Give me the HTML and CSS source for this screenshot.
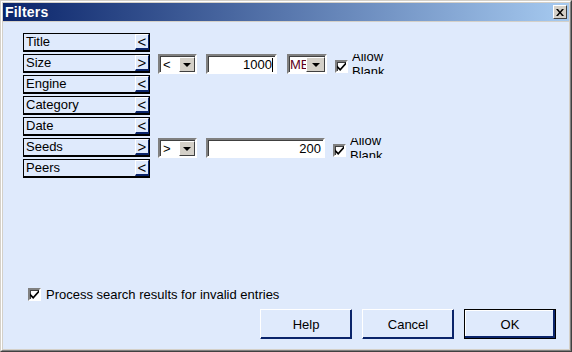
FILE: index.html
```html
<!DOCTYPE html>
<html lang="en">
<head>
  <meta charset="UTF-8">
  <title>Filters</title>
  <link rel="stylesheet" href="styles.css">
</head>
<body>

  <div class="window">
    <div class="frame">
      <div class="titlebar">
        <span class="title">Filters</span>
        <span class="close">
          <svg width="8" height="7" viewBox="0 0 8 7"><path d="M0 0h2l2 2.5L6 0h2L5 3.5 8 7H6L4 4.5 2 7H0l3-3.5z" fill="#000"/></svg>
        </span>
      </div>

      <div class="client">
        <div class="fields">
          <div class="row">
            <div class="field"><span class="name">Title</span><span class="dir">&lt;</span></div>
          </div>
          <div class="row">
            <div class="field"><span class="name">Size</span><span class="dir">&gt;</span></div>
            <div class="combo op"><span class="value">&lt;</span><span class="drop"><i></i></span></div>
            <div class="edit small">1000<span class="caret"></span></div>
            <div class="combo unit"><span class="value unit-text">MB</span><span class="drop"><i></i></span></div>
            <span class="check"><svg width="9" height="9" viewBox="0 0 7 7"><path d="M0 2.5l2.5 2.5L7 0v2L2.5 7 0 4.5z" fill="#000"/></svg></span>
            <div class="allow">Allow<br>Blank</div>
          </div>
          <div class="row">
            <div class="field"><span class="name">Engine</span><span class="dir">&lt;</span></div>
          </div>
          <div class="row">
            <div class="field"><span class="name">Category</span><span class="dir">&lt;</span></div>
          </div>
          <div class="row">
            <div class="field"><span class="name">Date</span><span class="dir">&lt;</span></div>
          </div>
          <div class="row">
            <div class="field"><span class="name">Seeds</span><span class="dir">&gt;</span></div>
            <div class="combo op"><span class="value">&gt;</span><span class="drop"><i></i></span></div>
            <div class="edit wide">200</div>
            <span class="check"><svg width="9" height="9" viewBox="0 0 7 7"><path d="M0 2.5l2.5 2.5L7 0v2L2.5 7 0 4.5z" fill="#000"/></svg></span>
            <div class="allow">Allow<br>Blank</div>
          </div>
          <div class="row">
            <div class="field"><span class="name">Peers</span><span class="dir">&lt;</span></div>
          </div>
        </div>

        <div class="spacer"></div>

        <label class="process">
          <span class="check"><svg width="9" height="9" viewBox="0 0 7 7"><path d="M0 2.5l2.5 2.5L7 0v2L2.5 7 0 4.5z" fill="#000"/></svg></span>
          Process search results for invalid entries
        </label>

        <div class="buttons">
          <button>Help</button>
          <button>Cancel</button>
          <button class="default">OK</button>
        </div>
      </div>
    </div>
  </div>

</body>
</html>
```

FILE: styles.css
```css
body {
  margin: 0;
  font-family: 'Liberation Sans', Arial, sans-serif;
  font-size: 13px;
  color: #000;
}

.window {
  width: 572px;
  height: 352px;
  box-sizing: border-box;
  border: 1px solid;
  border-color: #d4d0c8 #404040 #404040 #d4d0c8;
}

.frame {
  height: 100%;
  box-sizing: border-box;
  border: 1px solid;
  border-color: #fff #808080 #808080 #fff;
  background-color: #d4d0c8;
  padding: 1px;
  display: flex;
  flex-direction: column;
}

.titlebar {
  height: 18px;
  flex-shrink: 0;
  margin-bottom: 1px;
  background: linear-gradient(to right, #0a246a, #a6caf0);
  display: flex;
  align-items: center;
  justify-content: space-between;
  padding: 0 2px 0 2px;
}

.title {
  color: #fff;
  font-weight: bold;
  font-size: 14px;
  letter-spacing: 0.2px;
}

.close {
  width: 14px;
  height: 14px;
  box-sizing: border-box;
  background-color: #d4d0c8;
  border: 1px solid;
  border-color: #fff #404040 #404040 #fff;
  display: flex;
  align-items: center;
  justify-content: center;
}

.client {
  flex: 1;
  background-color: #dfeafc;
  display: flex;
  flex-direction: column;
  padding: 11px 13px 10px 20px;
}

.fields {
  display: flex;
  flex-direction: column;
  gap: 2px;
}

.row {
  height: 19px;
  display: flex;
  align-items: flex-start;
}

.field {
  width: 127px;
  height: 19px;
  box-sizing: border-box;
  border: 1px solid #000;
  border-bottom-width: 2px;
  display: flex;
  align-items: stretch;
}

.name {
  flex: 1;
  padding-left: 2px;
  line-height: 16px;
}

.dir {
  width: 14px;
  box-sizing: border-box;
  border-top: 1px solid #fff;
  border-left: 1px solid #fff;
  border-right: 1px solid #0a246a;
  border-bottom: 2px solid #0a246a;
  font-size: 15px;
  line-height: 14px;
  text-align: center;
}

.combo {
  height: 20px;
  box-sizing: border-box;
  border: 2px solid;
  border-color: #808080 #fff #fff #808080;
  box-shadow: inset 1px 1px 0 #404040;
  background-color: #fff;
  display: flex;
  margin-left: 8px;
}

.op {
  width: 39px;
}

.unit {
  width: 40px;
  margin-left: 10px;
}

.value {
  flex: 1;
  padding-left: 3px;
  line-height: 17px;
  overflow: hidden;
  white-space: nowrap;
}

.unit-text {
  color: #600020;
  padding-left: 1px;
}

.drop {
  width: 16px;
  flex-shrink: 0;
  box-sizing: border-box;
  margin: 1px 0 0 0;
  background-color: #d4d0c8;
  border: 1px solid;
  border-color: #fff #404040 #404040 #fff;
  display: flex;
  align-items: center;
  justify-content: center;
}

.unit .drop {
  width: 19px;
}

.drop i {
  width: 0;
  height: 0;
  border-left: 4px solid transparent;
  border-right: 4px solid transparent;
  border-top: 4px solid #000;
}

.edit {
  height: 20px;
  box-sizing: border-box;
  margin-left: 9px;
  border: 2px solid;
  border-color: #808080 #fff #fff #808080;
  box-shadow: inset 1px 1px 0 #404040;
  background-color: #fff;
  text-align: right;
  padding-right: 2px;
  line-height: 17px;
  display: flex;
  justify-content: flex-end;
}

.small {
  width: 71px;
}

.wide {
  width: 119px;
}

.caret {
  width: 1px;
  height: 14px;
  margin-top: 2px;
  background-color: #000;
}

.check {
  width: 13px;
  height: 13px;
  box-sizing: border-box;
  border: 2px solid;
  border-color: #808080 #fff #fff #808080;
  box-shadow: inset 1px 1px 0 #404040;
  background-color: #fff;
  display: flex;
  align-items: center;
  justify-content: center;
  flex-shrink: 0;
}

.row .check {
  margin-left: 8px;
  margin-top: 6px;
}

.allow {
  height: 20px;
  margin-left: 4px;
  overflow: hidden;
  display: flex;
  flex-direction: column;
  justify-content: center;
  line-height: 15px;
}

.spacer {
  flex: 1;
}

.process {
  display: flex;
  align-items: center;
  gap: 5px;
  margin-left: 5px;
  height: 14px;
  margin-bottom: 8px;
}

.buttons {
  display: flex;
  justify-content: flex-end;
  gap: 10px;
}

button {
  width: 92px;
  height: 30px;
  font-family: 'Liberation Sans', Arial, sans-serif;
  font-size: 13px;
  color: #000;
  background-color: #dfeafc;
  border: 1px solid;
  border-color: #fff #0a246a #0a246a #fff;
  box-shadow: inset -1px -1px 0 #0a246a;
  padding: 0;
}

button.default {
  border: 1px solid #000;
  box-shadow: inset -2px -2px 0 #0a246a, inset 1px 1px 0 #fff;
}
```
